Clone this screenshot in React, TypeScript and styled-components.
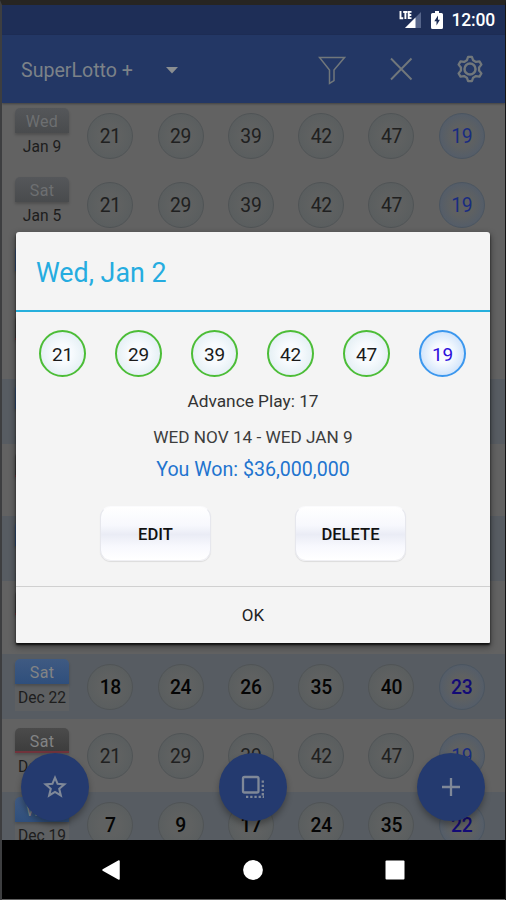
import React from "react";
import styled, { createGlobalStyle, css } from "styled-components";

const GlobalStyle = createGlobalStyle`
  * { box-sizing: border-box; }
  body { margin: 0; background: #1d1d1d; font-family: Roboto, "Liberation Sans", sans-serif; }
  button { font-family: inherit; }
`;

const Screen = styled.div`
  position: relative;
  width: 506px;
  height: 900px;
  overflow: hidden;
  display: flex;
  flex-direction: column;
  background: #626262;
  border-top: 5px solid #272522;
  border-left: 2px solid #3d3e40;
  border-right: 1px solid #151515;
`;

const StatusBar = styled.div`
  height: 30px;
  flex: none;
  display: flex;
  align-items: center;
  justify-content: flex-end;
  padding-right: 10px;
  background: #1e2e57;
  color: #fff;
`;

const Signal = styled.svg`
  width: 23px;
  height: 20px;
  margin-right: 9px;
`;

const Battery = styled.svg`
  width: 12px;
  height: 18px;
  margin-right: 9px;
`;

const Clock = styled.span`
  font-size: 17.5px;
  font-weight: 500;
  line-height: 32px;
  letter-spacing: -0.2px;
`;

const AppBar = styled.header`
  height: 68px;
  flex: none;
  display: flex;
  align-items: center;
  padding: 2px 21px 0 19px;
  background: #233765;
  box-shadow: 0 1px 2px rgba(0, 0, 0, 0.35);
  color: #71777b;
  z-index: 1;
`;

const AppTitle = styled.h1`
  margin: 0;
  width: 145px;
  font-size: 19.6px;
  font-weight: 400;
  white-space: nowrap;
  color: #7c8288;
`;

const Actions = styled.div`
  margin-left: auto;
  display: flex;
  gap: 41px;
  svg { display: block; }
`;

const List = styled.main`
  flex: 1;
  min-height: 0;
  overflow: hidden;
`;

const Row = styled.div<{ $tinted: boolean }>`
  display: flex;
  height: 65px;
  margin-bottom: 3.9px;
  padding: 5px 0 0 13px;
  background: ${(p) => (p.$tinted ? "#575c62" : "transparent")};
`;

type Tone = "faded" | "blue" | "dark";

const dayBackground: Record<Tone, string> = {
  faded: "linear-gradient(#55575a, #494b4d)",
  blue: "linear-gradient(#3f5a82, #2f4f7c)",
  dark: "linear-gradient(#4b4b4b, #3d3d3d)",
};

const DateCard = styled.div<{ $tinted: boolean }>`
  width: 54px;
  height: 52px;
  margin-right: 18.3px;
  text-align: center;
  background: ${(p) => (p.$tinted ? "#5e6062" : "transparent")};
  border-radius: 5px 5px 0 0;
`;

const Day = styled.div<{ $tone: Tone }>`
  height: 25px;
  border-radius: 5px 5px 0 0;
  font-size: 16px;
  line-height: 27px;
  letter-spacing: 0.3px;
  background: ${(p) => dayBackground[p.$tone]};
  color: ${(p) => (p.$tone === "faded" ? "#6d6f71" : "#838485")};
  box-shadow: 0 2px 3px rgba(0, 0, 0, 0.2);
  ${(p) => p.$tone === "dark" && css`border-bottom: 2px solid #70333c;`}
`;

const DateText = styled.div`
  font-size: 15.6px;
  line-height: 28px;
  color: #1d1d1d;
  white-space: nowrap;
`;

const Numbers = styled.div`
  display: flex;
  gap: 24.3px;
  padding-top: 5px;
`;

const Ball = styled.div<{ $strong: boolean; $mega: boolean }>`
  width: 46px;
  height: 46px;
  flex: none;
  border-radius: 50%;
  border: 1.5px solid ${(p) => (p.$mega ? "#4b5560" : "#505456")};
  background: radial-gradient(circle, #5f6161 35%, ${(p) => (p.$mega ? "#545d69" : "#5a5e5f")} 72%);
  text-align: center;
  line-height: 46px;
  font-size: 19.3px;
  letter-spacing: -0.3px;
  font-weight: ${(p) => (p.$strong ? 500 : 400)};
  color: ${(p) => (p.$mega ? (p.$strong ? "#130b76" : "#192c80") : p.$strong ? "#050505" : "#202020")};
`;

const FabRow = styled.div`
  position: absolute;
  left: 19px;
  right: 20px;
  top: 748px;
  display: flex;
  justify-content: space-between;
`;

const Fab = styled.button`
  width: 68px;
  height: 68px;
  padding: 0;
  border: 0;
  border-radius: 50%;
  display: grid;
  place-items: center;
  background: #243a6f;
  color: #7f8898;
  box-shadow: 0 4px 6px rgba(0, 0, 0, 0.3);
`;

const NavBar = styled.nav`
  height: 59px;
  flex: none;
  display: flex;
  justify-content: space-between;
  align-items: center;
  padding: 0 100px 0 100px;
  margin-bottom: 1px;
  background: #000;
  z-index: 1;
`;

const Dialog = styled.section`
  position: absolute;
  left: 14px;
  top: 227px;
  width: 474px;
  height: 411px;
  display: flex;
  flex-direction: column;
  align-items: stretch;
  border-radius: 3px 3px 1px 1px;
  background: #f4f4f4;
  box-shadow: 0 2px 2px rgba(0, 0, 0, 0.75), 0 3px 6px 1px rgba(0, 0, 0, 0.4);
  text-align: center;
  z-index: 2;
`;

const DialogTitle = styled.h2`
  margin: 0;
  height: 80px;
  padding-left: 20px;
  border-bottom: 2px solid #26afdc;
  text-align: left;
  font-size: 26.8px;
  font-weight: 400;
  line-height: 82px;
  color: #25ace0;
`;

const Picks = styled.div`
  display: flex;
  justify-content: space-between;
  margin: 18px 24px 0 23px;
`;

const Pick = styled.div<{ $mega: boolean }>`
  width: 47px;
  height: 47px;
  border-radius: 50%;
  border: 2px solid ${(p) => (p.$mega ? "#3b97ee" : "#4cbd37")};
  background: radial-gradient(circle, #f8fbfe 30%, ${(p) => (p.$mega ? "#cfe3fb" : "#e4eff4")} 75%);
  line-height: 45px;
  font-size: 19px;
  letter-spacing: -0.2px;
  color: ${(p) => (p.$mega ? "#2e10dc" : "#1b1b1b")};
`;

const AdvancePlay = styled.div`
  margin-top: 10px;
  font-size: 17.3px;
  line-height: 28px;
  color: #333;
`;

const Period = styled.div`
  margin-top: 8px;
  font-size: 17.2px;
  line-height: 28px;
  color: #3d3d3d;
`;

const Winnings = styled.div`
  margin-top: 4px;
  font-size: 19.6px;
  line-height: 29px;
  color: #1f74cf;
`;

const DialogButtons = styled.div`
  display: flex;
  gap: 84px;
  justify-content: center;
  margin: 22px 0 25px 0;
`;

const GlossButton = styled.button`
  width: 111px;
  height: 55px;
  padding: 1px 0 0;
  border: 1px solid #e6e7ed;
  border-top-color: #fbfbfd;
  border-bottom-color: #f0f0f4;
  border-radius: 11px;
  background: linear-gradient(#fff 0%, #f7f8fd 35%, #eaecf5 52%, #f8f9fe 75%, #fff 100%);
  box-shadow: 0 1px 1px rgba(0, 0, 0, 0.1);
  font-size: 16.6px;
  font-weight: 500;
  color: #111;
`;

const OkButton = styled.button`
  flex: 1;
  border: 0;
  border-top: 1px solid #d0d0d0;
  padding: 0 0 1px;
  background: transparent;
  font-size: 17px;
  color: #222;
`;

interface Draw {
  day?: string;
  date?: string;
  tone: Tone;
  tinted?: boolean;
  numbers?: number[];
}

const played = [21, 29, 39, 42, 47, 19];

const draws: Draw[] = [
  { day: "Wed", date: "Jan 9", tone: "faded", numbers: played },
  { day: "Sat", date: "Jan 5", tone: "faded", numbers: played },
  { tone: "blue" },
  { tone: "dark" },
  { tone: "blue", tinted: true },
  { tone: "dark" },
  { tone: "blue", tinted: true },
  { tone: "dark" },
  { day: "Sat", date: "Dec 22", tone: "blue", tinted: true, numbers: [18, 24, 26, 35, 40, 23] },
  { day: "Sat", date: "Dec 22", tone: "dark", numbers: played },
  { day: "Wed", date: "Dec 19", tone: "blue", tinted: true, numbers: [7, 9, 17, 24, 35, 22] },
];

const gearPath = Array.from({ length: 6 }, (_, i) => {
  const point = (r: number, deg: number) => {
    const a = ((i * 60 + deg - 90) * Math.PI) / 180;
    return `${(14 + r * Math.cos(a)).toFixed(2)} ${(14 + r * Math.sin(a)).toFixed(2)}`;
  };
  return `${i ? "L" : "M"}${point(12.2, -9)} L${point(12.2, 9)} L${point(9.2, 20)} L${point(9.2, 40)}`;
}).join(" ") + "Z";

export default function App() {
  return (
    <>
      <GlobalStyle />
      <Screen>
        <StatusBar>
          <Signal viewBox="0 0 23 20">
            <path d="M6 18 22 2v16Z" fill="#56658a" />
            <path d="M6 18 16.500 7.500V18Z" fill="#fff" />
            <path d="M1.500 1v7.200h2.700M4.200 2h4.200M6.400 2v7M12.500 1.900H9.700v6.200h2.800M9.700 5h2.600" fill="none" stroke="#fff" strokeWidth="1.900" />
          </Signal>
          <Battery viewBox="0 0 12 18">
            <path d="M4 0h4v2h2.500Q12 2 12 3.500v13Q12 18 10.500 18h-9Q0 18 0 16.500v-13Q0 2 1.500 2H4Z" fill="#fff" />
            <path d="M7 4.500 3.300 10.300h2.200v4.200L8.900 8.700H7Z" fill="#1e2e57" />
          </Battery>
          <Clock>12:00</Clock>
        </StatusBar>

        <AppBar>
          <AppTitle>SuperLotto +</AppTitle>
          <svg width="12" height="7" viewBox="0 0 12 7"><path d="M0 0h12L6 6.500Z" fill="#8a8e91" /></svg>
          <Actions>
            <svg width="28" height="30" viewBox="0 0 28 30" fill="none" stroke="currentColor" strokeWidth="1.500">
              <path d="M1.500 2.500h25L16 15v10.700l-4.500 2.800V15Z" />
            </svg>
            <svg width="28" height="30" viewBox="0 0 28 30" fill="none" stroke="currentColor" strokeWidth="1.900">
              <path d="m4 3.500 20.500 21M24.500 3.500 4 24.500" />
            </svg>
            <svg width="28" height="28" viewBox="0 0 28 28" fill="none" stroke="currentColor" strokeLinejoin="round">
              <path d={gearPath} strokeWidth="2.300" />
              <circle cx="14" cy="14" r="5.500" strokeWidth="2.500" />
            </svg>
          </Actions>
        </AppBar>

        <List>
          {draws.map((draw, index) => (
            <Row key={index} $tinted={!!draw.tinted}>
              <DateCard $tinted={!!draw.tinted}>
                <Day $tone={draw.tone}>{draw.day}</Day>
                <DateText>{draw.date}</DateText>
              </DateCard>
              <Numbers>
                {draw.numbers?.map((n, i) => (
                  <Ball key={i} $strong={!!draw.tinted} $mega={i === 5}>{n}</Ball>
                ))}
              </Numbers>
            </Row>
          ))}
        </List>

        <FabRow>
          <Fab aria-label="Favorites">
            <svg width="26" height="26" viewBox="0 0 24 24" fill="none" stroke="currentColor" strokeWidth="1.900">
              <path d="m12 3.300 2.400 5.800 6.300.500-4.800 4.100 1.500 6.100-5.400-3.300-5.400 3.300 1.500-6.100-4.800-4.100 6.300-.500Z" />
            </svg>
          </Fab>
          <Fab aria-label="Copy to front">
            <svg width="28" height="28" viewBox="0 0 28 28" fill="none" stroke="currentColor">
              <rect x="4" y="4" width="15.500" height="15.500" rx="1.500" strokeWidth="2.300" />
              <path d="M23.800 7.500v17M7 23.800h18" strokeWidth="2.300" strokeDasharray="2.300 1.900" />
            </svg>
          </Fab>
          <Fab aria-label="Add">
            <svg width="20" height="20" viewBox="0 0 20 20" stroke="currentColor" strokeWidth="2.300">
              <path d="M10 1v18M1 10h18" />
            </svg>
          </Fab>
        </FabRow>

        <NavBar>
          <svg width="18" height="20" viewBox="0 0 18 20"><path d="M17 1v18L1 10Z" fill="#fff" stroke="#fff" strokeWidth="1.500" strokeLinejoin="round" /></svg>
          <svg width="20" height="20" viewBox="0 0 20 20"><circle cx="10" cy="10" r="9.900" fill="#fff" /></svg>
          <svg width="20" height="20" viewBox="0 0 20 20"><rect x=".5" y=".5" width="19" height="19" rx="1" fill="#fff" /></svg>
        </NavBar>

        <Dialog role="dialog">
          <DialogTitle>Wed, Jan 2</DialogTitle>
          <Picks>
            {played.map((n, i) => (
              <Pick key={n} $mega={i === 5}>{n}</Pick>
            ))}
          </Picks>
          <AdvancePlay>Advance Play: 17</AdvancePlay>
          <Period>WED NOV 14 - WED JAN 9</Period>
          <Winnings>You Won: $36,000,000</Winnings>
          <DialogButtons>
            <GlossButton>EDIT</GlossButton>
            <GlossButton>DELETE</GlossButton>
          </DialogButtons>
          <OkButton>OK</OkButton>
        </Dialog>
      </Screen>
    </>
  );
}
